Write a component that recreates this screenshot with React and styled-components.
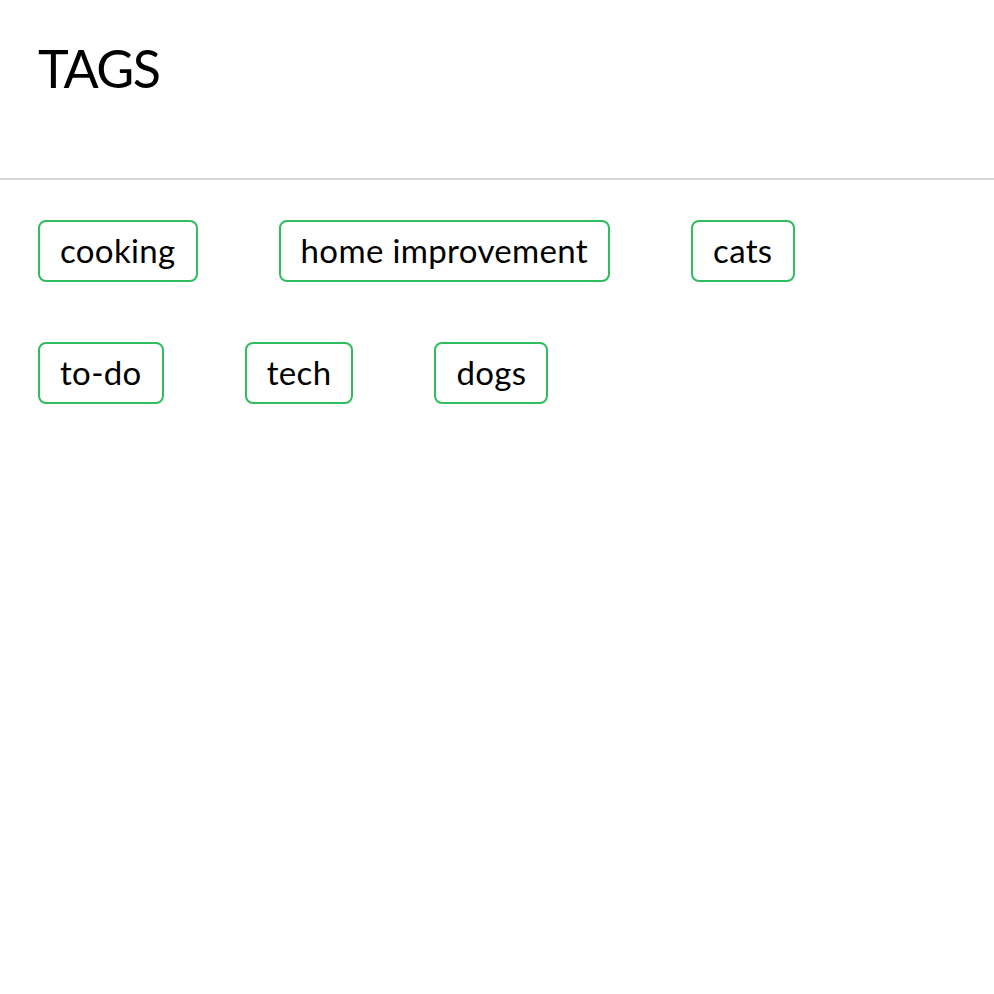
import React from "react";
import styled, { createGlobalStyle } from "styled-components";

const GlobalStyle = createGlobalStyle`
    html, body {
        margin: 0;
        padding: 0;
        background: #ffffff;
    }
    body {
        font-family: Lato, "Open Sans", "Liberation Sans", sans-serif;
        color: #000000;
    }
`;

const tags = ["cooking", "home improvement", "cats", "to-do", "tech", "dogs"];

function App() {
    return (
        <>
        <GlobalStyle />
        <Page>
            <Header>
                <Title>TAGS</Title>
            </Header>
            <TagList>
                {tags.map((tag) => (
                    <Tag key={tag}>{tag}</Tag>
                ))}
            </TagList>
        </Page>
        </>
    );
}
export default App;

const Page = styled.div`
    width: 100%;
    min-height: 994px;
`;

const Header = styled.header`
    height: 180px;
    padding: 0 38px;
    box-sizing: border-box;
    border-bottom: 2px solid #d6d6d6;
    display: flex;
    align-items: flex-start;
`;

const Title = styled.h1`
    margin: 36px 0 0;
    font-size: 52px;
    font-weight: 400;
    line-height: 64px;
    letter-spacing: -1.5px;
`;

const TagList = styled.div`
    display: flex;
    flex-wrap: wrap;
    column-gap: 81px;
    row-gap: 60px;
    padding: 40px 38px;
    max-width: 880px;
`;

const Tag = styled.span`
    height: 62px;
    box-sizing: border-box;
    padding: 0 20px 2px;
    display: flex;
    align-items: center;
    border: 2px solid #2fbd5e;
    border-radius: 8px;
    font-size: 33px;
    letter-spacing: 0.35px;
    line-height: 1;
    white-space: nowrap;
`;
